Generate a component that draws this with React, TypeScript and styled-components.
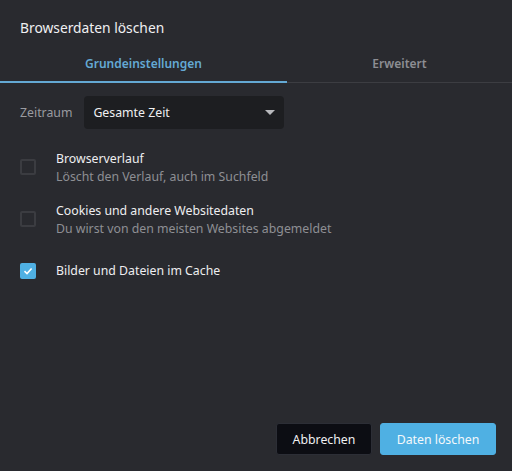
import styled, { createGlobalStyle } from "styled-components";

const GlobalStyle = createGlobalStyle`
  html, body {
    margin: 0;
    padding: 0;
    background: #292a2f;
  }
  body {
    font-family: "Noto Sans", "Open Sans", sans-serif;
    -webkit-font-smoothing: antialiased;
  }
`;

const Dialog = styled.div`
  width: 512px;
  height: 471px;
  box-sizing: border-box;
  background: #292a2f;
  display: flex;
  flex-direction: column;
  color: #e8e8ea;
`;

const Title = styled.h1`
  margin: 0;
  padding: 18px 20px 0;
  font-size: 13.8px;
  font-weight: 400;
  line-height: 20px;
  color: #f0f0f2;
`;

const Tabs = styled.div`
  display: flex;
  margin-top: 12px;
  border-bottom: 1px solid #3c3d42;
`;

const Tab = styled.div<{ $active?: boolean; $width: number }>`
  width: ${(p) => p.$width}px;
  text-align: center;
  font-size: 12px;
  font-weight: 600;
  line-height: 18px;
  padding: 5px 0 10px;
  color: ${(p) => (p.$active ? "#64a9d4" : "#8d8e93")};
  box-shadow: ${(p) => (p.$active ? "inset 0 -2px 0 #64a9d4" : "none")};
  margin-bottom: -1px;
`;

const Body = styled.div`
  flex: 1;
  padding: 13px 20px 0;
  display: flex;
  flex-direction: column;
`;

const RangeRow = styled.div`
  display: flex;
  align-items: center;
  gap: 12px;
`;

const RangeLabel = styled.span`
  font-size: 12.3px;
  color: #9a9ba0;
`;

const Select = styled.div`
  width: 200px;
  height: 33px;
  box-sizing: border-box;
  background: #1d1e21;
  border-radius: 4px;
  display: flex;
  align-items: center;
  justify-content: space-between;
  padding: 0 9px 0 9px;
  font-size: 12.3px;
  color: #f0f0f2;
`;

const Caret = styled.span`
  width: 0;
  height: 0;
  border-left: 5px solid transparent;
  border-right: 5px solid transparent;
  border-top: 5px solid #b9babd;
`;

const List = styled.div`
  display: flex;
  flex-direction: column;
  gap: 16px;
  margin-top: 21px;
`;

const Item = styled.label`
  display: flex;
  align-items: flex-start;
  gap: 20px;
`;

const Box = styled.span<{ $checked?: boolean }>`
  width: 16px;
  height: 16px;
  box-sizing: border-box;
  border-radius: 2px;
  flex-shrink: 0;
  margin-top: 9px;
  border: ${(p) => (p.$checked ? "none" : "2px solid #3b3c41")};
  background: ${(p) => (p.$checked ? "#4fb0e3" : "transparent")};
  display: flex;
  align-items: center;
  justify-content: center;
`;

const ItemText = styled.div`
  display: flex;
  flex-direction: column;
  min-height: 34px;
  justify-content: center;
`;

const ItemTitle = styled.span`
  font-size: 12.3px;
  line-height: 18px;
  color: #eeeef0;
`;

const ItemSub = styled.span`
  font-size: 12.3px;
  line-height: 18px;
  color: #8e8f94;
`;

const Footer = styled.div`
  display: flex;
  justify-content: flex-end;
  gap: 8px;
  padding: 0 16px 16px;
`;

const Button = styled.button<{ $primary?: boolean }>`
  height: 32px;
  box-sizing: border-box;
  border-radius: 3px;
  font-family: inherit;
  font-size: 12.3px;
  padding: 0;
  width: ${(p) => (p.$primary ? "116px" : "96px")};
  color: ${(p) => (p.$primary ? "#f4f8fb" : "#f0f0f2")};
  background: ${(p) => (p.$primary ? "#4fb0e3" : "#0c0d13")};
  border: 1px solid ${(p) => (p.$primary ? "#4fb0e3" : "#2c2e36")};
`;

const Check = () => (
  <svg width="10" height="10" viewBox="0 0 10 10">
    <path d="M1.5 5.2 L4 7.5 L8.6 2.5" fill="none" stroke="#fff" strokeWidth="1.6" />
  </svg>
);

const items = [
  { title: "Browserverlauf", sub: "Löscht den Verlauf, auch im Suchfeld", checked: false },
  { title: "Cookies und andere Websitedaten", sub: "Du wirst von den meisten Websites abgemeldet", checked: false },
  { title: "Bilder und Dateien im Cache", checked: true },
];

export default function App() {
  return (
    <>
      <GlobalStyle />
      <Dialog>
        <Title>Browserdaten löschen</Title>
        <Tabs>
          <Tab $active $width={287}>Grundeinstellungen</Tab>
          <Tab $width={225}>Erweitert</Tab>
        </Tabs>
        <Body>
          <RangeRow>
            <RangeLabel>Zeitraum</RangeLabel>
            <Select>
              Gesamte Zeit
              <Caret />
            </Select>
          </RangeRow>
          <List>
            {items.map((it) => (
              <Item key={it.title}>
                <Box $checked={it.checked}>{it.checked && <Check />}</Box>
                <ItemText>
                  <ItemTitle>{it.title}</ItemTitle>
                  {it.sub && <ItemSub>{it.sub}</ItemSub>}
                </ItemText>
              </Item>
            ))}
          </List>
        </Body>
        <Footer>
          <Button>Abbrechen</Button>
          <Button $primary>Daten löschen</Button>
        </Footer>
      </Dialog>
    </>
  );
}
